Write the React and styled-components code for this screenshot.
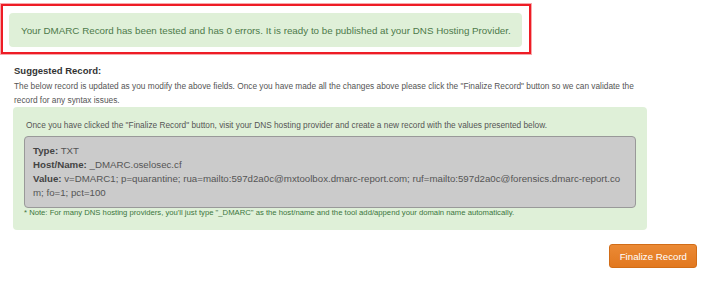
import React from "react";
import styled, { createGlobalStyle } from "styled-components";

const GlobalStyle = createGlobalStyle`
  body {
    margin: 0;
    background: #fff;
    font-family: "Liberation Sans", Arial, sans-serif;
  }
`;

const Page = styled.div`
  width: 709px;
  height: 281px;
  padding: 4px 0 0 1px;
  box-sizing: border-box;
`;

const Highlight = styled.div`
  width: 530px;
  height: 50px;
  box-sizing: border-box;
  border: 2px solid #ee1c25;
  box-shadow: 0 0 0 1px #f7a8ab;
  padding: 7px 7px 0 6px;
`;

const Alert = styled.div`
  height: 34px;
  background-color: #dff0d8;
  border-radius: 4px;
  color: #4d7a4a;
  font-size: 9.8px;
  display: flex;
  align-items: center;
  padding-left: 12px;
`;

const Section = styled.div`
  padding: 11px 0 0 12px;
  width: 634px;
`;

const Heading = styled.h4`
  margin: 0;
  font-size: 9.5px;
  line-height: 12px;
  font-weight: bold;
  color: #333;
  padding-left: 1px;
`;

const Text = styled.p`
  margin: 2px 0 0 1px;
  font-size: 8.3px;
  line-height: 14px;
  color: #555;
`;

const Panel = styled.div`
  background-color: #dff0d8;
  border-radius: 4px;
  padding: 12px 11px 13px 11px;
`;

const Intro = styled.div`
  font-size: 8.3px;
  line-height: 12px;
  color: #555;
  padding-left: 2px;
`;

const RecordBox = styled.div`
  margin-top: 5px;
  background-color: #cbcbcb;
  border: 1px solid #999;
  border-radius: 4px;
  padding: 7px 8px 7px 8px;
  color: #555;
  font-size: 9.7px;
  line-height: 14px;
  word-break: break-all;
`;

const Label = styled.b`
  color: #444;
`;

const Note = styled.div`
  font-size: 7.7px;
  line-height: 8px;
  color: #3c763d;
  padding-top: 1px;
`;

const Footer = styled.div`
  display: flex;
  justify-content: flex-end;
  padding: 14px 12px 0 0;
`;

const Button = styled.button`
  height: 24px;
  padding: 0 9px 0 10px;
  border: 1px solid #d26d17;
  border-radius: 3px;
  background: linear-gradient(#eb8a35, #e2781f);
  color: #fff;
  font-family: "Liberation Sans", Arial, sans-serif;
  font-size: 9.7px;
  cursor: pointer;
`;

export default function App() {
  return (
    <Page>
      <GlobalStyle />
      <Highlight>
        <Alert>
          Your DMARC Record has been tested and has 0 errors. It is ready to be
          published at your DNS Hosting Provider.
        </Alert>
      </Highlight>
      <Section>
        <Heading>Suggested Record:</Heading>
        <Text>
          The below record is updated as you modify the above fields. Once you
          have made all the changes above please click the "Finalize Record"
          button so we can validate the record for any syntax issues.
        </Text>
        <Panel>
          <Intro>
            Once you have clicked the "Finalize Record" button, visit your DNS
            hosting provider and create a new record with the values presented
            below.
          </Intro>
          <RecordBox>
            <div>
              <Label>Type:</Label> TXT
            </div>
            <div>
              <Label>Host/Name:</Label> _DMARC.oselosec.cf
            </div>
            <div>
              <Label>Value:</Label> v=DMARC1; p=quarantine;
              rua=mailto:597d2a0c@mxtoolbox.dmarc-report.com;
              ruf=mailto:597d2a0c@forensics.dmarc-report.com; fo=1; pct=100
            </div>
          </RecordBox>
          <Note>
            * Note: For many DNS hosting providers, you'll just type "_DMARC" as
            the host/name and the tool add/append your domain name
            automatically.
          </Note>
        </Panel>
      </Section>
      <Footer>
        <Button>Finalize Record</Button>
      </Footer>
    </Page>
  );
}
